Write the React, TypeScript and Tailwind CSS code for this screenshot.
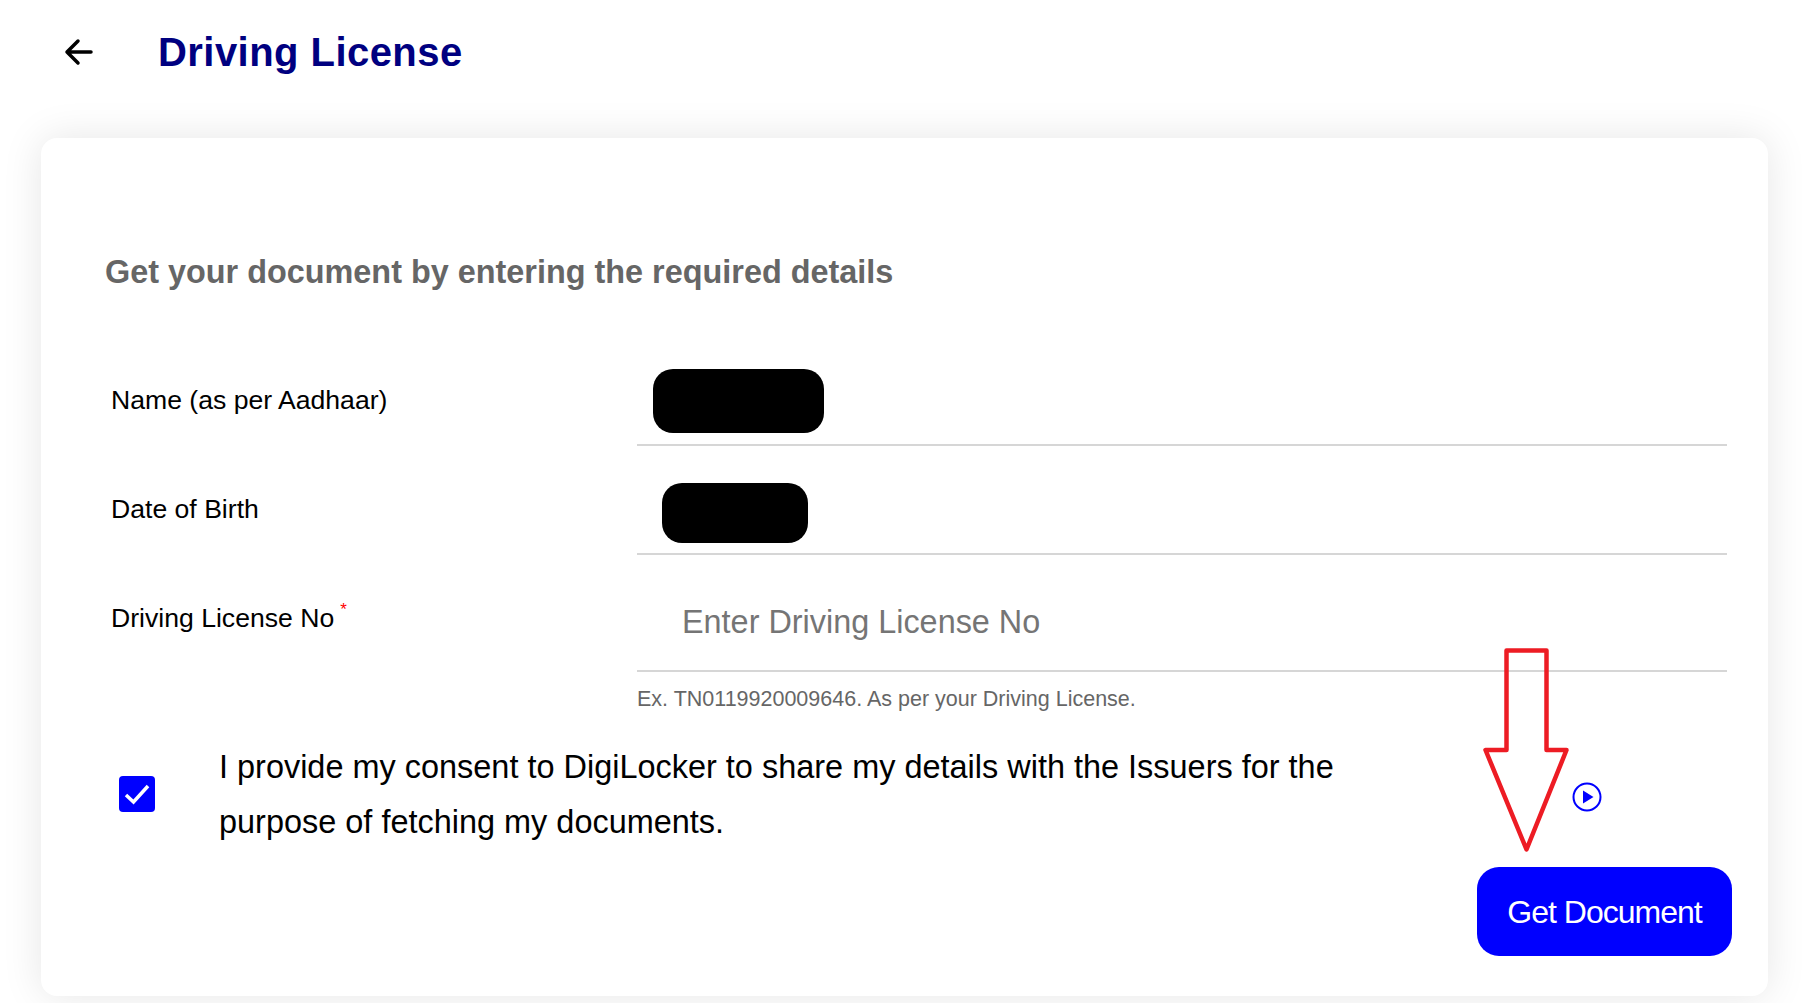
import { useState } from 'react';

function Field({
  label,
  required,
  className,
  children,
}: {
  label: string;
  required?: boolean;
  className: string;
  children: React.ReactNode;
}) {
  return (
    <div className={`flex ${className}`}>
      <label className="w-[532px] shrink-0 pl-[6px] text-[26.6px] leading-[30px] text-black">
        {label}
        {required && (
          <sup className="ml-[6px] align-baseline relative top-[-12px] text-[17px] text-[#ff0000]">*</sup>
        )}
      </label>
      <div className="flex-1 border-b-2 border-[#d6d6d6]">{children}</div>
    </div>
  );
}

function RedArrow() {
  return (
    <svg
      className="absolute left-[1440px] top-[508px]"
      width="90"
      height="208"
      viewBox="0 0 90 208"
      fill="none"
    >
      <path
        d="M25.5 4.5H65.5V104H85.5L45.5 203.5L4.5 104H25.5Z"
        stroke="#ed1c24"
        strokeWidth="4.5"
        strokeLinejoin="round"
      />
    </svg>
  );
}

export default function App() {
  const [checked, setChecked] = useState(true);

  return (
    <div className="h-[1003px] overflow-hidden bg-white font-['Liberation_Sans',Arial,sans-serif]">
      <header className="flex h-[104px] items-center pl-[64px] mb-[34px]">
        <svg width="30" height="30" viewBox="0 0 30 30" fill="none" stroke="black" strokeWidth="3.5" strokeLinecap="round" strokeLinejoin="round">
          <path d="M27 15H3M14 4L3 15L14 26" />
        </svg>
        <h1 className="ml-[64px] text-[40px] tracking-[0.45px] font-bold leading-none text-[#000080]">
          Driving License
        </h1>
      </header>

      <main className="relative ml-[41px] h-[858px] w-[1727px] rounded-[16px] bg-white pt-[116px] pl-[64px] pr-[41px] shadow-[0_0_40px_rgba(0,0,0,0.1)]">
        <h2 className="h-[36px] text-[32.4px] font-bold leading-[36px] text-[#666666]">
          Get your document by entering the required details
        </h2>

        <div className="mt-[61px]">
          <Field label="Name (as per Aadhaar)" className="h-[95px] pt-[34px]">
            <div className="ml-[16px] -mt-[16px] h-[64px] w-[171px] rounded-[20px] bg-black" />
          </Field>
          <Field label="Date of Birth" className="h-[109px] pt-[48px]">
            <div className="ml-[25px] -mt-[11px] h-[60px] w-[146px] rounded-[20px] bg-black" />
          </Field>
          <Field label="Driving License No" required className="h-[117px] pt-[48px]">
            <input
              placeholder="Enter Driving License No"
              className="ml-[45px] -mt-[1px] w-[800px] bg-transparent text-[32.4px] leading-[40px] outline-none placeholder:text-[#757575]"
            />
          </Field>
        </div>

        <p className="mt-[15px] ml-[532px] text-[21.5px] leading-[24px] text-[#666666]">
          Ex. TN0119920009646. As per your Driving License.
        </p>

        <div className="mt-[29px] flex pl-[14px]">
          <button
            type="button"
            onClick={() => setChecked(!checked)}
            className="mt-[36px] flex h-[36px] w-[36px] shrink-0 items-center justify-center rounded-[4px] bg-[#0000ff]"
          >
            {checked && (
              <svg width="28" height="24" viewBox="0 0 28 24" fill="none" stroke="white" strokeWidth="3.5">
                <path d="M3 13L10.5 20L25 4" />
              </svg>
            )}
          </button>
          <p className="ml-[64px] w-[1200px] shrink-0 text-[32.46px] leading-[55px] text-black">
            I provide my consent to DigiLocker to share my details with the Issuers for the purpose of fetching my documents.
          </p>
          <svg className="ml-[153px] mt-[42px]" width="30" height="30" viewBox="0 0 30 30" fill="none">
            <circle cx="15" cy="15" r="13.5" stroke="#0000ff" strokeWidth="2" />
            <path d="M11 8.5L21.5 15L11 21.5Z" fill="#0000ff" />
          </svg>
        </div>

        <div className="mt-[17px] flex justify-end">
          <button
            type="button"
            className="mr-[-5px] h-[89px] w-[255px] rounded-[22px] bg-[#0000ff] text-[32px] tracking-[-1px] text-white"
          >
            Get Document
          </button>
        </div>

        <RedArrow />
      </main>
    </div>
  );
}
